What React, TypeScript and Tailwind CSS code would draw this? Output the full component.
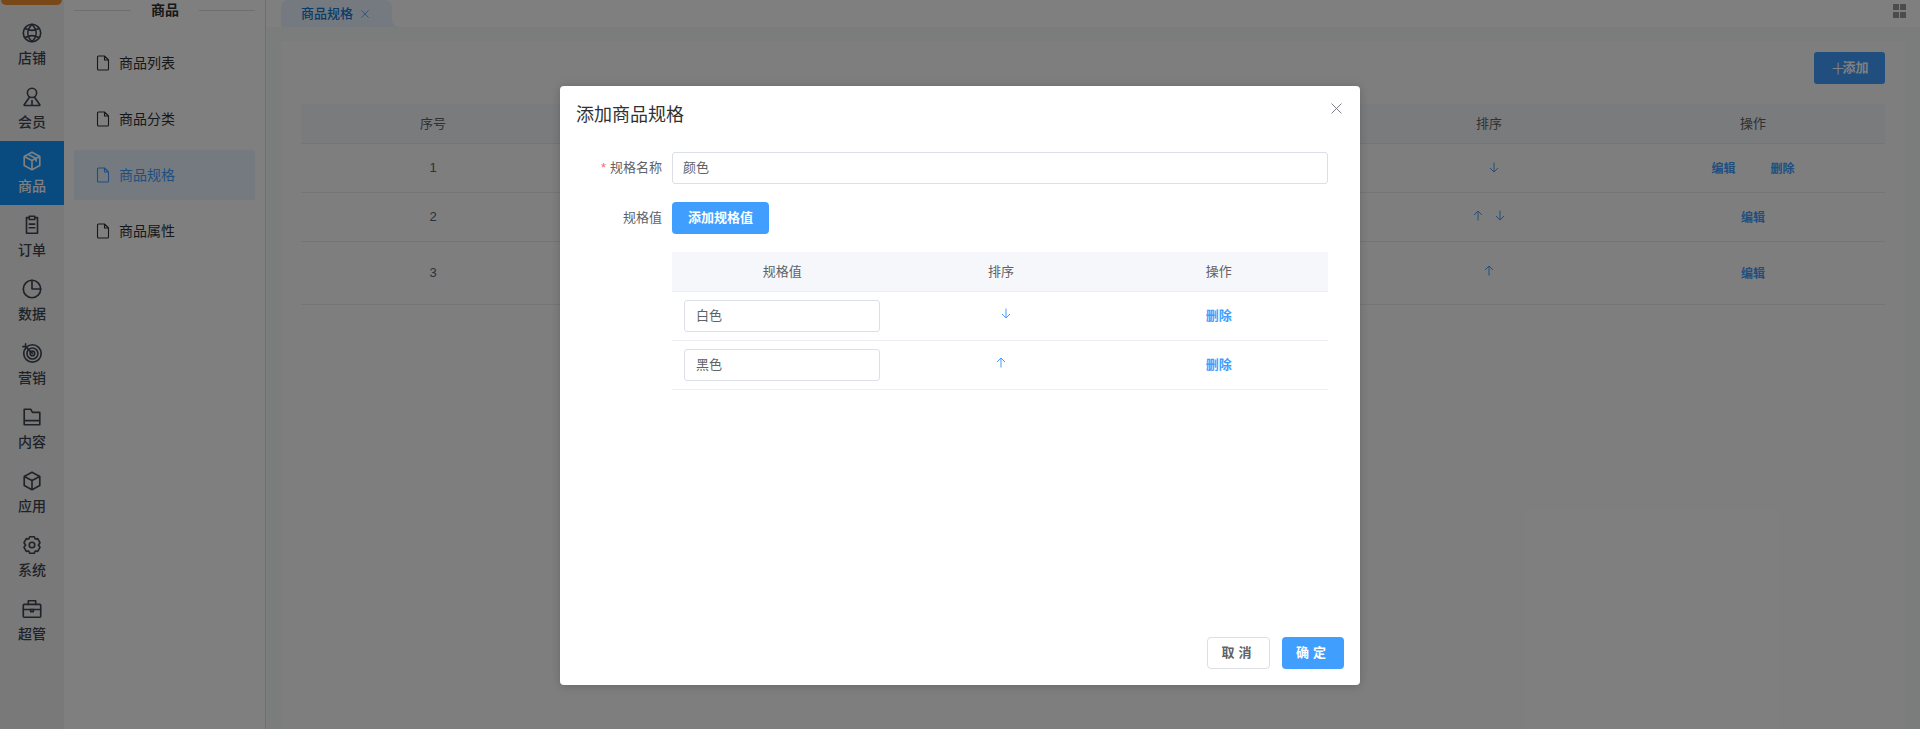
import React from "react";

const FONT = "font-['Liberation_Sans','Noto_Sans_CJK_SC',sans-serif]";

const S = ({ children, size = 22 }: { children: React.ReactNode; size?: number }) => (
  <svg width={size} height={size} viewBox="0 0 24 24" fill="none" stroke="currentColor" strokeWidth="1.8" strokeLinecap="round" strokeLinejoin="round">
    {children}
  </svg>
);

const icons: Record<string, React.ReactNode> = {
  globe: (
    <S>
      <circle cx="12" cy="12" r="9.5" />
      <path d="M4.500 7c4.500 2.500 10.500 2.500 15 0M4.500 17c4.500-2.500 10.500-2.500 15 0M12 2.500c-6 6-6 13 0 19M12 2.500c6 6 6 13 0 19" />
    </S>
  ),
  user: (
    <S>
      <circle cx="12" cy="7.500" r="5" />
      <path d="M9 12.500 3.500 20.500a.6.6 0 0 0 .5.8h16a.6.6 0 0 0 .5-.8L15 12.500M12 16v5" />
    </S>
  ),
  box3: (
    <S>
      <path d="M12 2.500 20.500 7v10L12 21.500 3.500 17V7zM3.500 7l8.500 4.500L20.500 7M12 11.500v10M8 4.800l8.500 4.500v3" />
    </S>
  ),
  clip: (
    <S>
      <path d="M9 4H6v17h12V4h-3M9 2.500h6v3.500H9zM9 11h6M9 15h6" />
    </S>
  ),
  pie: (
    <S>
      <circle cx="12" cy="12" r="9.500" />
      <path d="M12 2.500V12h9.500" />
    </S>
  ),
  target: (
    <S>
      <circle cx="12.500" cy="12.500" r="9.500" />
      <circle cx="12.500" cy="12.500" r="6" />
      <circle cx="12.500" cy="12.500" r="2.500" />
      <path d="M12.500 12.500 5 5M5 5H2M5 5V2" />
    </S>
  ),
  folder: (
    <S>
      <path d="M3.500 3.500h7l2 3.500h8v13.500h-17zM3.500 16h17" />
    </S>
  ),
  cube: (
    <S>
      <path d="M12 2.500 20.500 7v10L12 21.500 3.500 17V7zM3.500 7l8.500 4.500L20.500 7M12 11.500v10" />
    </S>
  ),
  gear: (
    <S>
      <path d="M9.500 3h5l1 2.500 2.700-.4 2.500 4.400-1.700 2.500 1.700 2.500-2.500 4.400-2.700-.4-1 2.500h-5l-1-2.500-2.700.4-2.500-4.400L5 12 3.300 9.500l2.500-4.400 2.700.4z" />
      <circle cx="12" cy="12" r="3" />
    </S>
  ),
  case: (
    <S>
      <rect x="2.500" y="7" width="19" height="14" rx="1" />
      <path d="M8 7V3h8v4M2.500 12.500h19" />
      <rect x="10.500" y="12.500" width="3" height="2.500" />
    </S>
  ),
};

const rail: [string, string][] = [
  ["globe", "店铺"],
  ["user", "会员"],
  ["box3", "商品"],
  ["clip", "订单"],
  ["pie", "数据"],
  ["target", "营销"],
  ["folder", "内容"],
  ["cube", "应用"],
  ["gear", "系统"],
  ["case", "超管"],
];

const FileIcon = () => (
  <svg width="14" height="16" viewBox="0 0 14 16" fill="none" stroke="currentColor" strokeWidth="1.1" strokeLinejoin="round">
    <path d="M2.500 1h6L12.500 5v9a1 1 0 0 1-1 1h-9a1 1 0 0 1-1-1V2a1 1 0 0 1 1-1zM8.500 1v4h4" />
  </svg>
);

const Up = () => (
  <svg width="10" height="11" viewBox="0 0 10 11" fill="none" stroke="currentColor" strokeWidth="1">
    <path d="M5 10.500V1M1 5l4-4 4 4" />
  </svg>
);
const Down = () => (
  <svg width="10" height="11" viewBox="0 0 10 11" fill="none" stroke="currentColor" strokeWidth="1">
    <path d="M5 .5V10M1 6l4 4 4-4" />
  </svg>
);

const X = ({ size }: { size: number }) => (
  <svg width={size} height={size} viewBox="0 0 10 10" fill="none" stroke="currentColor" strokeWidth={size > 9 ? 0.9 : 1}>
    <path d="M.5.5l9 9M9.500.5l-9 9" />
  </svg>
);

const Link = ({ children }: { children: React.ReactNode }) => (
  <span className="text-[12px] font-bold text-[#409eff]">{children}</span>
);

const rowGrid = "grid grid-cols-6 items-center text-center";

export default function App() {
  return (
    <div className={`${FONT} relative flex h-[729px] w-[1920px] overflow-hidden bg-white text-[#303133]`}>
      <aside className="w-[64px] shrink-0 bg-[#f2f3f4]">
        <div className="h-[13px]">
          <div className="ml-[1px] h-[5px] w-[61px] rounded-b-[6px] bg-[#f0922e]" />
        </div>
        {rail.map(([k, label]) => {
          const active = label === "商品";
          return (
            <div
              key={label}
              className={`flex h-[64px] flex-col items-center pt-[9px] ${active ? "bg-[#1297ff] text-white" : "text-[#3f4650]"}`}
            >
              {icons[k]}
              <span className="mt-[3px] text-[14px] font-medium leading-[22px]">{label}</span>
            </div>
          );
        })}
      </aside>

      <nav className="w-[202px] shrink-0 border-r border-[#dcdfe6] bg-white px-[10px]">
        <div className="flex h-[20px] items-center justify-between">
          <span className="h-px w-[57px] bg-[#dcdfe6]" />
          <span className="text-[14px] font-bold text-[#303133]">商品</span>
          <span className="h-px w-[56px] bg-[#dcdfe6]" />
        </div>
        <div className="mt-[18px] flex flex-col gap-[6px]">
          {["商品列表", "商品分类", "商品规格", "商品属性"].map((t) => (
            <div
              key={t}
              className={`flex h-[50px] items-center gap-[9px] pl-[22px] text-[14px] ${t === "商品规格" ? "bg-[#e8f4ff] text-[#409eff]" : "text-[#303133]"}`}
            >
              <FileIcon />
              <span>{t}</span>
            </div>
          ))}
        </div>
      </nav>

      <main className="flex min-w-0 flex-1 flex-col">
        <div className="flex h-[27px] shrink-0 items-end justify-between bg-white pl-[15px] pr-[14px]">
          <div className="relative flex h-[27px] w-[111px] items-center gap-[8px] rounded-t-[8px] bg-[#e8f4ff] pl-[20px] text-[13px] font-medium text-[#1677d2] after:absolute after:bottom-0 after:left-full after:h-[8px] after:w-[8px] after:bg-[radial-gradient(circle_at_100%_0,transparent_8px,#e8f4ff_8px)]">
            <span>商品规格</span>
            <span className="text-[#409eff]">
              <X size={8} />
            </span>
          </div>
          <div className="mb-[9px] grid h-[14px] w-[13px] grid-cols-2 gap-[1.5px]">
            <i className="bg-[#999]" />
            <i className="bg-[#999]" />
            <i className="bg-[#999]" />
            <i className="bg-[#999]" />
          </div>
        </div>
        <div className="flex-1 bg-[#f7f8f8] pl-[15px] pr-[15px] pt-[14px]">
          <div className="h-full bg-[#fdfdfd] px-[20px] pt-[11px]">
            <div className="flex justify-end">
              <div className="flex h-[32px] w-[71px] items-center justify-center rounded-[3px] bg-[#409eff] text-[13px] font-bold text-white">
                <span className="text-[15px] font-normal leading-none">＋</span>
                <span className="-ml-[3px]">添加</span>
              </div>
            </div>
            <div className="mt-[20px]">
              <div className={`${rowGrid} h-[40px] border-b border-[#e8eaf0] bg-[#f4f6fa] text-[13px] text-[#606266]`}>
                <span>序号</span>
                <span className="col-span-3" />
                <span>排序</span>
                <span>操作</span>
              </div>
              <div className={`${rowGrid} h-[49px] border-b border-[#e8eaf0] text-[13px] text-[#5b6470]`}>
                <span>1</span>
                <span className="col-span-3" />
                <span className="flex justify-center pb-[2px] pl-[10px] text-[#409eff]">
                  <Down />
                </span>
                <span className="flex justify-center gap-[35px] pt-[1px]">
                  <Link>编辑</Link>
                  <Link>删除</Link>
                </span>
              </div>
              <div className={`${rowGrid} h-[49px] border-b border-[#e8eaf0] text-[13px] text-[#5b6470]`}>
                <span>2</span>
                <span className="col-span-3" />
                <span className="flex justify-center gap-[12px] pb-[3px] text-[#409eff]">
                  <Up />
                  <Down />
                </span>
                <span className="pt-[1px]">
                  <Link>编辑</Link>
                </span>
              </div>
              <div className={`${rowGrid} h-[63px] border-b border-[#e8eaf0] text-[13px] text-[#5b6470]`}>
                <span>3</span>
                <span className="col-span-3" />
                <span className="flex justify-center pb-[6px] text-[#409eff]">
                  <Up />
                </span>
                <span className="pt-[1px]">
                  <Link>编辑</Link>
                </span>
              </div>
            </div>
          </div>
        </div>
      </main>

      <div className="absolute inset-0 flex items-start justify-center bg-black/50 pt-[86px]">
        <div className="relative flex h-[599px] w-[800px] flex-col rounded-[4px] bg-white shadow-[0_1px_10px_rgba(0,0,0,0.18)]">
          <div className="flex h-[58px] items-center justify-between pl-[16px] pr-[18px]">
            <span className="text-[18px] text-[#303133]">添加商品规格</span>
            <span className="-mt-[14px] text-[#7a7d85]">
              <X size={11} />
            </span>
          </div>
          <div className="flex-1 pr-[32px] pt-[8px]">
            <div className="flex items-center">
              <label className="w-[102px] text-right text-[13px] text-[#606266]">
                <span className="mr-[4px] text-[#f56c6c]">*</span>规格名称
              </label>
              <div className="ml-[10px] flex h-[32px] flex-1 items-center rounded-[3px] border border-[#dcdfe6] px-[10px] text-[13px] text-[#606266]">
                颜色
              </div>
            </div>
            <div className="mt-[18px] flex items-center">
              <label className="w-[102px] text-right text-[13px] text-[#606266]">规格值</label>
              <div className="ml-[10px] flex h-[32px] w-[97px] items-center justify-center rounded-[4px] bg-[#409eff] text-[13px] font-bold text-white">
                添加规格值
              </div>
            </div>
            <div className="ml-[112px] mt-[18px]">
              <div className="grid h-[40px] grid-cols-3 items-center border-b border-[#ebeef5] bg-[#f5f7fa] text-center text-[13px] text-[#606266]">
                <span className="pl-[2px]">规格值</span>
                <span className="pl-[2px]">排序</span>
                <span>操作</span>
              </div>
              {[
                ["白色", "down"],
                ["黑色", "up"],
              ].map(([v, dir]) => (
                <div key={v} className="grid h-[49px] grid-cols-3 items-center border-b border-[#ebeef5] text-center">
                  <div className="pl-[12px]">
                    <div className="flex h-[32px] w-[196px] items-center rounded-[3px] border border-[#dcdfe6] px-[11px] text-left text-[13px] text-[#606266]">
                      {v}
                    </div>
                  </div>
                  <span className={`flex justify-center pb-[5px] text-[#409eff] ${dir === "down" ? "pl-[12px]" : "pl-[2px]"}`}>
                    {dir === "down" ? <Down /> : <Up />}
                  </span>
                  <span className="text-[13px] font-bold text-[#409eff]">删除</span>
                </div>
              ))}
            </div>
          </div>
          <div className="flex justify-end gap-[12px] pb-[16px] pr-[16px]">
            <div className="flex h-[32px] w-[63px] items-center justify-center rounded-[4px] border border-[#dcdfe6] text-[13px] font-bold tracking-[4px] text-[#606266]">
              取消
            </div>
            <div className="flex h-[32px] w-[62px] items-center justify-center rounded-[4px] bg-[#409eff] text-[13px] font-bold tracking-[4px] text-white">
              确定
            </div>
          </div>
        </div>
      </div>
    </div>
  );
}
